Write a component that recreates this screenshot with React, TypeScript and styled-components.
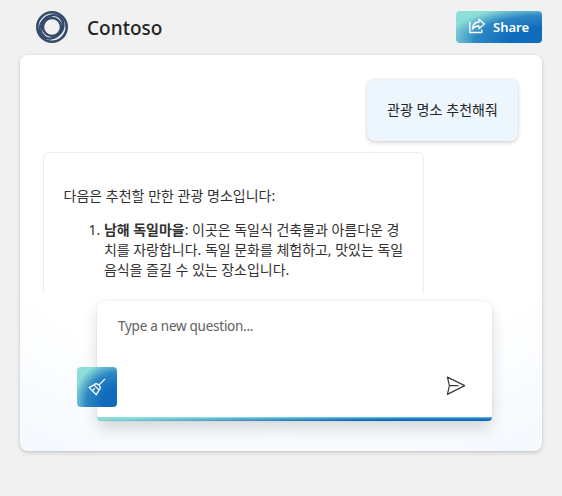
import React from "react";
import styled, { createGlobalStyle } from "styled-components";

const brand =
  "radial-gradient(109.81% 107.82% at 100.1% 90.19%, #0f6cbd 33.63%, #2d87c3 70.31%, #8dddd8 100%)";

const Global = createGlobalStyle`
  * { box-sizing: border-box; }
  html, body { margin: 0; background: #f1f1f1; }
  body { font-family: "Noto Sans", "Noto Sans CJK KR", sans-serif; overflow: hidden; }
  button { border: 0; padding: 0; font: inherit; }
`;

const Page = styled.div`
  width: 562px;
  height: 496px;
  padding: 0 20px;
  background: #f1f1f1;
`;

const Header = styled.header`
  height: 55px;
  padding-left: 16px;
  display: flex;
  align-items: center;
`;

const Logo = styled.svg`
  width: 32px;
  height: 32px;
  margin-top: -1px;
  margin-right: 19px;
`;

const Title = styled.h1`
  margin: 0;
  flex: 1;
  font-size: 19px;
  line-height: 28px;
  font-weight: 540;
  letter-spacing: 0.02px;
  color: #242424;
`;

const ShareButton = styled.button`
  width: 86px;
  height: 32px;
  padding: 0 0 0 12px;
  margin-top: -1px;
  display: flex;
  align-items: center;
  gap: 7px;
  border-radius: 4px;
  background: ${brand};
  color: #fff;
  font-size: 13px;
  font-weight: 600;
`;

const ChatPanel = styled.main`
  height: 396px;
  border-radius: 8px;
  padding: 16px 16px 0 15px;
  background: radial-gradient(108.78% 108.78% at 50.02% 19.78%, #ffffff 57.29%, #eef6fe 100%);
  box-shadow: 0 2px 4px rgba(0, 0, 0, 0.14), 0 0 2px rgba(0, 0, 0, 0.12);
`;

const MessageStream = styled.section`
  height: 222px;
  padding: 8px 8px 0;
  display: flex;
  flex-direction: column;
  overflow: hidden;
`;

const UserMessage = styled.div`
  align-self: flex-end;
  flex: none;
  width: 151px;
  height: 62px;
  padding: 20px 0 0 20px;
  border-radius: 8px;
  background: #edf5fd;
  box-shadow: 0 2px 4px rgba(0, 0, 0, 0.14), 0 0 2px rgba(0, 0, 0, 0.12);
  font-size: 14px;
  line-height: 22px;
  letter-spacing: 0.07px;
  color: #242424;
  white-space: nowrap;
`;

const Answer = styled.article`
  flex: none;
  width: 381px;
  height: 200px;
  margin-top: 11px;
  padding: 33px 19px 0 19.5px;
  border: 1px solid #ededed;
  border-radius: 6px;
  background: #fff;
  font-size: 14px;
  line-height: 20px;
  color: #323130;
  white-space: nowrap;
`;

const Intro = styled.p`
  margin: 0 0 13.5px;
  letter-spacing: 0.01px;
`;

const Places = styled.ol`
  margin: 0;
  padding-left: 40.4px;
  letter-spacing: -0.02px;
`;

const Composer = styled.form`
  position: relative;
  width: 395px;
  height: 120px;
  margin: 8px 0 0 62px;
  padding: 15px 21px;
  border-radius: 8px;
  background: #fff;
  box-shadow: 0 8px 16px rgba(0, 0, 0, 0.14), 0 0 2px rgba(0, 0, 0, 0.12);
`;

const Placeholder = styled.div`
  font-size: 13.5px;
  line-height: 21px;
  letter-spacing: -0.26px;
  color: #616161;
`;

const Accent = styled.div`
  position: absolute;
  left: 0;
  right: 0;
  bottom: 0;
  height: 4px;
  border-radius: 0 0 4px 4px;
  background: radial-gradient(106.04% 106.06% at 100.1% 90.19%, #0f6cbd 33.63%, #8dddd8 100%);
`;

const ClearButton = styled.button`
  position: absolute;
  left: -20px;
  top: 66px;
  width: 40px;
  height: 40px;
  display: grid;
  place-items: center;
  border-radius: 4px;
  background: ${brand};
`;

const SendButton = styled.button`
  position: absolute;
  right: 26px;
  top: 75px;
  width: 20px;
  height: 20px;
  background: none;
`;

const Glyph = styled.svg`
  display: block;
  fill: none;
  stroke-linejoin: round;
  stroke-linecap: round;
`;

export default function App() {
  return (
    <>
      <Global />
      <Page>
        <Header>
          <Logo viewBox="0 0 32 32" fill="none" stroke="#344a69">
            <circle cx="16" cy="16" r="14.7" strokeWidth="2.6" />
            <ellipse cx="15.6" cy="15.3" rx="12.7" ry="10.6" strokeWidth="2" transform="rotate(-50 16 16)" />
            <ellipse cx="16.5" cy="16.4" rx="12.4" ry="10.4" strokeWidth="1.5" transform="rotate(-50 16 16)" />
            <circle cx="16" cy="16" r="9" strokeWidth="2.4" />
          </Logo>
          <Title>Contoso</Title>
          <ShareButton>
            <Glyph width="18" height="18" viewBox="0 0 18 18" stroke="#fff" strokeWidth="1.3">
              <path d="M1.8 4.2V14.5H13.8V11.9" />
              <path d="M11 1.2 16.4 6 11 10.8V8C8 7.9 6 9 4.3 11.2 4.7 7 7 4.2 11 4Z" />
            </Glyph>
            Share
          </ShareButton>
        </Header>
        <ChatPanel>
          <MessageStream>
            <UserMessage>관광 명소 추천해줘</UserMessage>
            <Answer>
              <Intro>다음은 추천할 만한 관광 명소입니다:</Intro>
              <Places>
                <li>
                  <strong>남해 독일마을</strong>: 이곳은 독일식 건축물과 아름다운 경
                  <br />
                  치를 자랑합니다. 독일 문화를 체험하고, 맛있는 독일
                  <br />
                  음식을 즐길 수 있는 장소입니다.
                </li>
              </Places>
            </Answer>
          </MessageStream>
          <Composer>
            <Placeholder>Type a new question...</Placeholder>
            <Accent />
            <ClearButton type="button" aria-label="Clear chat">
              <Glyph width="18" height="18" viewBox="0 0 18 18" stroke="#fff" strokeWidth="1.3">
                <path d="M16.6 1.4 10.9 7.1M5.9 6.9C7.3 5.6 9.5 5.7 10.9 7.1 12.3 8.5 12.4 10.7 11.1 12.1L8.3 16.7 1.2 9.6ZM5.9 6.9 11.1 12.1M4.6 12.6 6.4 10.8" />
              </Glyph>
            </ClearButton>
            <SendButton type="button" aria-label="Send">
              <Glyph width="20" height="20" viewBox="0 0 20 20" stroke="#3b3a39" strokeWidth="1.2">
                <path d="M1.4 1.1 18.7 9.6 1.4 18.4 3.4 9.6ZM3.4 9.6H12" />
              </Glyph>
            </SendButton>
          </Composer>
        </ChatPanel>
      </Page>
    </>
  );
}
